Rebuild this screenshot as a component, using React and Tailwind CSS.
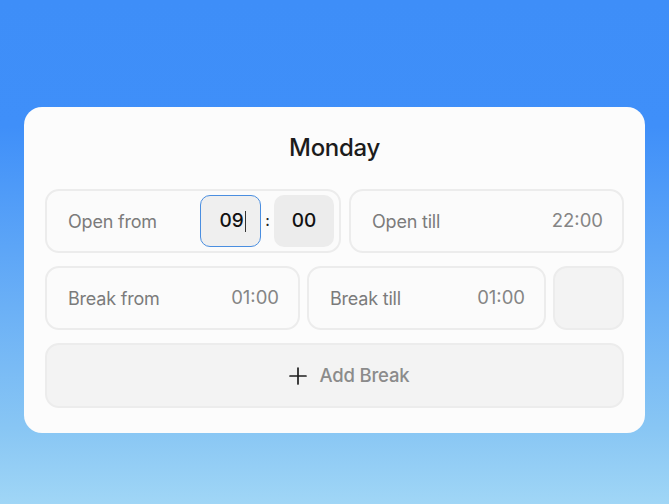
import React from 'react';

const Field = ({ label, value, className = '' }) => (
  <div className={`flex items-center justify-between h-[64px] rounded-[14px] border-2 border-[#ececec] bg-[#fbfbfb] pl-[21px] pr-[19px] ${className}`}>
    <span className="text-[18px] text-[#7b7b7b] tracking-[-0.2px]">{label}</span>
    <span className="text-[18.5px] text-[#858585]">{value}</span>
  </div>
);

export default function App() {
  return (
    <div
      className="w-[669px] h-[504px] pt-[107px] px-[24px] bg-[linear-gradient(180deg,#3e8ef8_0%,#3f8ff9_25%,#88c6f4_85%,#a0d6f6_100%)]"
      style={{ fontFamily: 'Inter, "Noto Sans", sans-serif' }}
    >
      <div className="w-[621px] h-[326px] rounded-[18px] bg-[#fcfcfc] px-[21px] pt-[25px]">
        <h1 className="text-center text-[24px] leading-[32px] font-medium text-[#1c1c1c] tracking-[-0.3px]">Monday</h1>

        <div className="mt-[25px] flex flex-col gap-[13px]">
          <div className="flex gap-[8px]">
            <div className="flex items-center justify-between w-[296px] h-[64px] rounded-[14px] border-2 border-[#ececec] bg-[#fbfbfb] pl-[21px] pr-[5px]">
              <span className="text-[18px] text-[#7b7b7b] tracking-[-0.2px]">Open from</span>
              <div className="flex items-center">
                <div className="w-[61px] h-[52px] rounded-[10px] border border-[#4a8ee0] bg-[#efefef] flex items-center justify-center pl-[4px] text-[19px] font-medium text-[#111]">
                  <span>09</span>
                  <span className="ml-[1px] w-[1px] h-[21px] bg-[#333]" />
                </div>
                <span className="w-[13px] text-center text-[15px] font-medium text-[#222]">:</span>
                <div className="w-[60px] h-[52px] rounded-[10px] bg-[#ececec] flex items-center justify-center text-[19px] font-medium text-[#111]">
                  00
                </div>
              </div>
            </div>
            <Field label="Open till" value="22:00" className="flex-1" />
          </div>

          <div className="flex gap-[7px]">
            <Field label="Break from" value="01:00" className="w-[255px]" />
            <Field label="Break till" value="01:00" className="w-[239px]" />
            <div className="flex-1 h-[64px] rounded-[14px] border-2 border-[#ececec] bg-[#f3f3f3]" />
          </div>

          <button className="h-[65px] w-full rounded-[14px] border-2 border-[#ececec] bg-[#f3f3f3] flex items-center justify-center gap-[12px] pl-[28px]">
            <svg width="20" height="20" viewBox="0 0 20 20" fill="none" stroke="#1f1f1f" strokeWidth="1.7" strokeLinecap="round">
              <path d="M10 2v16M2 10h16" />
            </svg>
            <span className="text-[18.5px] font-medium text-[#8b8b8b] tracking-[-0.2px]">Add Break</span>
          </button>
        </div>
      </div>
    </div>
  );
}
